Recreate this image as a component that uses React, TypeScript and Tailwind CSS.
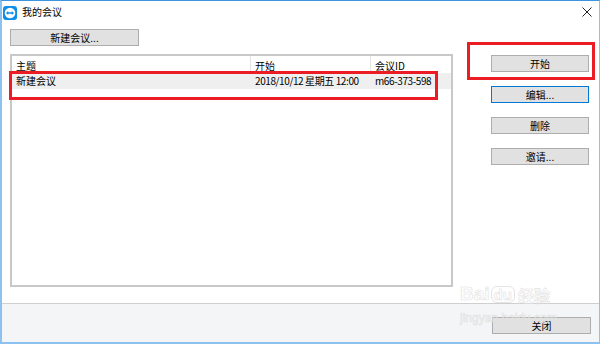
import React from 'react'

type Meeting = {
  id: string
  subject: string
  start: string
  meetingId: string
}

const meetings: Meeting[] = [
  { id: '1', subject: '新建会议', start: '2018/10/12 星期五 12:00', meetingId: 'm66-373-598' }
]

function TvIcon() {
  return (
    <svg width="14" height="14" viewBox="0 0 14 14">
      <rect x="0" y="0" width="14" height="14" rx="3" fill="#0e8ee9" />
      <circle cx="7" cy="7" r="5.3" fill="#ffffff" />
      <path d="M3 7 L5.2 5 L5.2 6.2 L8.8 6.2 L8.8 5 L11 7 L8.8 9 L8.8 7.8 L5.2 7.8 L5.2 9 Z" fill="#0e8ee9" />
    </svg>
  )
}

function WinButton({ label, focused = false, width = 'w-[98px]' }: { label: string; focused?: boolean; width?: string }) {
  return (
    <button
      className={
        'h-[17px] flex items-center justify-center bg-[#e1e1e1] text-[10px] leading-none text-black border ' +
        width +
        (focused ? ' border-[#0078d7]' : ' border-[#adadad]')
      }
    >
      {label}
    </button>
  )
}

export default function App() {
  return (
    <div className="relative w-[600px] h-[344px] overflow-hidden bg-white border-t border-t-[#3d94e0] border-l-2 border-l-[#8cc2ef] border-r border-r-[#8cc2ef] border-b-2 border-b-[#8cc2ef] font-['Noto_Sans_CJK_SC','Liberation_Sans',sans-serif] flex flex-col">
      {/* Title bar */}
      <div className="h-[21px] flex items-center pl-[1px] pr-[6px] shrink-0">
        <div className="mt-[2px]">
          <TvIcon />
        </div>
        <span className="ml-[5px] text-[10px] text-black leading-none">我的会议</span>
        <div className="flex-1"></div>
        <svg width="10" height="10" viewBox="0 0 10 10" className="mr-[1px]">
          <path d="M0.5 0.5 L9.5 9.5 M9.5 0.5 L0.5 9.5" stroke="#222" strokeWidth="1" />
        </svg>
      </div>

      {/* Main area */}
      <div className="h-[281px] flex shrink-0">
        <div className="pl-[8px] pt-[7px]">
          <WinButton label="新建会议..." width="w-[129px]" />

          {/* Meeting list */}
          <div className="mt-[8px] w-[443px] h-[233px] border-2 border-[#c8c8c8] bg-white">
            <div className="flex h-[17px] text-[10px] text-black">
              <div className="w-[239px] pl-[4px] pt-[5px] leading-none border-r border-[#e3e3e3]">主题</div>
              <div className="w-[120px] pl-[4px] pt-[5px] leading-none border-r border-[#e3e3e3]">开始</div>
              <div className="w-[80px] pl-[4px] pt-[5px] leading-none">会议ID</div>
            </div>
            {meetings.map((m) => (
              <div key={m.id} className="flex items-center h-[16px] bg-[#efefef] text-[10px] text-black leading-none">
                <div className="w-[239px] pl-[4px]">{m.subject}</div>
                <div className="w-[120px] pl-[4px] tracking-[-0.4px]">{m.start}</div>
                <div className="w-[80px] pl-[4px] tracking-[-0.4px]">{m.meetingId}</div>
              </div>
            ))}
          </div>
        </div>

        {/* Side buttons */}
        <div className="ml-[38px] pt-[33px] flex flex-col gap-[14px]">
          <WinButton label="开始" />
          <WinButton label="编辑..." focused />
          <WinButton label="删除" />
          <WinButton label="邀请..." />
        </div>
      </div>

      {/* Footer */}
      <div className="flex-1 border-t border-[#cfcfcf] bg-[#f4f5f7] flex justify-end pr-[8px] pt-[13px]">
        <WinButton label="关闭" width="w-[99px]" />
      </div>

      {/* Watermark */}
      <div className="absolute left-[458px] top-[283px] pointer-events-none select-none text-transparent [-webkit-text-stroke:0.6px_#e2e2e2]">
        <div className="flex items-end leading-none">
          <span className="text-[19px] font-bold font-['Liberation_Sans',sans-serif]">Bai</span>
          <span className="ml-[1px] px-[2px] rounded-[6px] border border-[#e4e4e4] text-[15px] font-bold font-['Liberation_Sans',sans-serif]">du</span>
          <span className="ml-[3px] text-[16px] font-bold">经验</span>
        </div>
        <div className="mt-[9px] text-[12px] leading-none font-['Liberation_Sans',sans-serif]">jingyan.baidu.com</div>
      </div>

      {/* Annotations */}
      <div className="absolute left-[7px] top-[70px] w-[429px] h-[29px] border-[3px] border-[#ec1c24]"></div>
      <div className="absolute left-[465px] top-[41px] w-[128px] h-[38px] border-[3px] border-[#ec1c24]"></div>
    </div>
  )
}
